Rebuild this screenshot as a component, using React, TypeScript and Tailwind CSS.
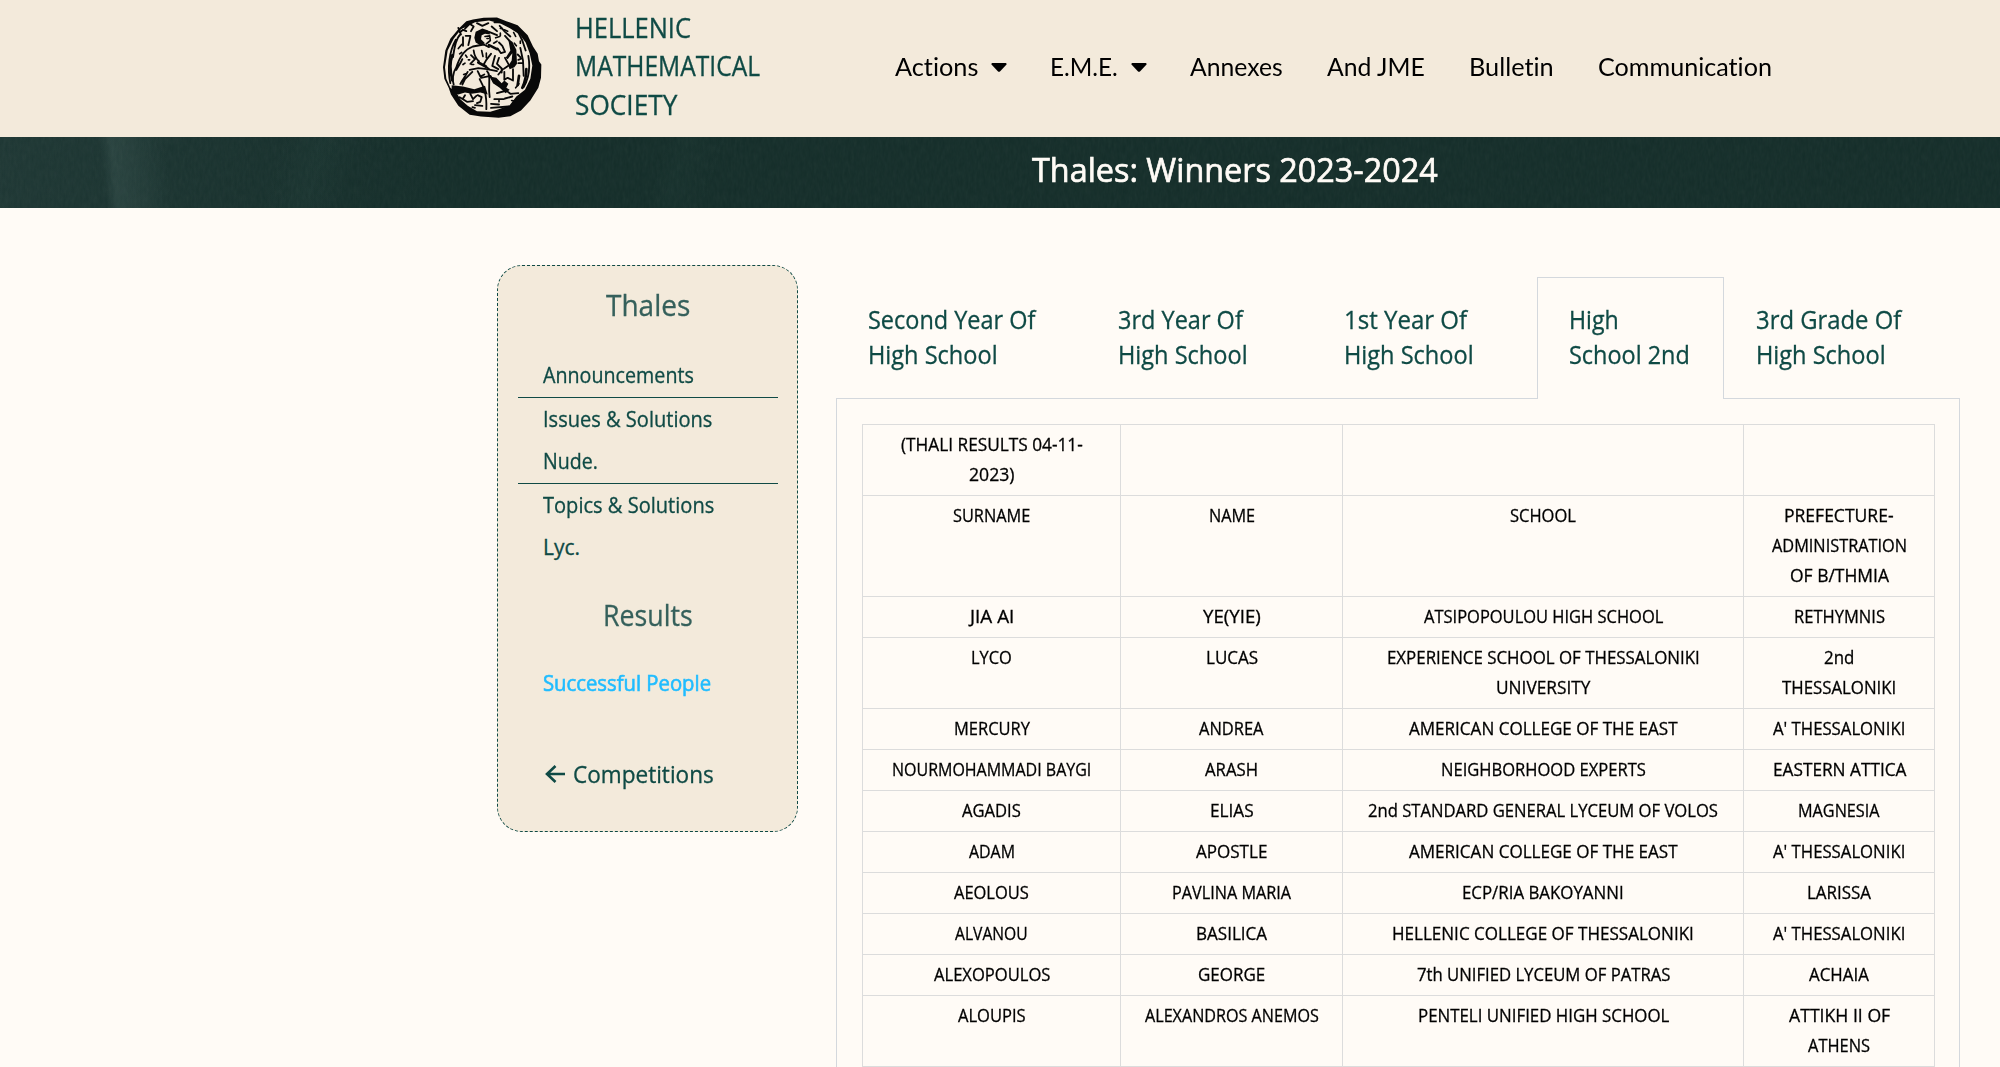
import { useLayoutEffect, useRef, useState } from "react";

/* A single line of text condensed or widened to an exact measure. */
function Line({ w, children }: { w: number; children: string }) {
  const ref = useRef<HTMLSpanElement>(null);
  const [k, setK] = useState(1);
  useLayoutEffect(() => {
    if (ref.current) setK(w / ref.current.offsetWidth);
  }, [w]);
  return (
    <span className="inline-block text-left align-top whitespace-nowrap" style={{ width: w }}>
      <span ref={ref} className="inline-block origin-left align-top" style={{ transform: `scaleX(${k})` }}>
        {children}
      </span>
    </span>
  );
}

type T = [string, number];
const AM: T[] = [["AMERICAN COLLEGE OF THE EAST", 269]];
const TH: T[] = [["A' THESSALONIKI", 132]];
const rows: T[][][] = [
  [[["(THALI RESULTS 04-11-", 182], ["2023)", 45]], [], [], []],
  [[["SURNAME", 77]], [["NAME", 46]], [["SCHOOL", 66]], [["PREFECTURE-", 110], ["ADMINISTRATION", 135], ["OF B/THMIA", 99]]],
  [[["JIA AI", 44]], [["YE(YIE)", 58]], [["ATSIPOPOULOU HIGH SCHOOL", 239]], [["RETHYMNIS", 91]]],
  [[["LYCO", 41]], [["LUCAS", 52]], [["EXPERIENCE SCHOOL OF THESSALONIKI", 313], ["UNIVERSITY", 94]], [["2nd", 30], ["THESSALONIKI", 114]]],
  [[["MERCURY", 76]], [["ANDREA", 65]], AM, TH],
  [[["NOURMOHAMMADI BAYGI", 199]], [["ARASH", 53]], [["NEIGHBORHOOD EXPERTS", 205]], [["EASTERN ATTICA", 133]]],
  [[["AGADIS", 59]], [["ELIAS", 44]], [["2nd STANDARD GENERAL LYCEUM OF VOLOS", 350]], [["MAGNESIA", 82]]],
  [[["ADAM", 46]], [["APOSTLE", 71]], AM, TH],
  [[["AEOLOUS", 75]], [["PAVLINA MARIA", 119]], [["ECP/RIA BAKOYANNI", 162]], [["LARISSA", 64]]],
  [[["ALVANOU", 73]], [["BASILICA", 71]], [["HELLENIC COLLEGE OF THESSALONIKI", 302]], TH],
  [[["ALEXOPOULOS", 116]], [["GEORGE", 67]], [["7th UNIFIED LYCEUM OF PATRAS", 253]], [["ACHAIA", 60]]],
  [[["ALOUPIS", 68]], [["ALEXANDROS ANEMOS", 174]], [["PENTELI UNIFIED HIGH SCHOOL", 251]], [["ATTIKH II OF", 101], ["ATHENS", 62]]],
];

function Coin() {
  return (
    <svg viewBox="38 50 297 302" className="h-[101px] w-[99px] shrink-0" fill="none" stroke="#080808" strokeLinecap="round" strokeLinejoin="round">
      <path fill="#080808" stroke="none" d="M128 57L160 52L200 51L228 62L262 74L292 104L308 138L322 160L326 182L333 192L332 232L324 262L300 300L272 330L240 347L205 352L152 348L118 343L84 316L62 282L55 262L42 235L38 200L45 150L60 115L85 85L108 62Z" />
      <path fill="#f3eadb" stroke="none" d="M134 65L176 60L212 70L240 84L268 102L286 126L298 158L306 195L300 235L284 268L258 288L238 314L205 326L180 334L140 332L112 316L90 296L78 276L60 262L48 235L44 200L52 150L70 115L92 86Z" />
      <g strokeWidth="5.5">
        <path d="M76 118C58 150 50 200 60 248M90 102C78 112 72 140 68 170M84 82L92 102M88 96L98 88L108 92M98 110V136M106 106H120M120 108L114 134M104 84L118 70L130 78L122 92" />
        <path d="M128 138C104 146 88 168 78 200C66 218 66 240 70 252M128 138L160 132L176 140M130 150C132 166 138 176 146 182M122 164L134 176L120 190M96 176C90 190 82 200 78 208" />
        <path d="M118 208L144 203L170 206L200 212M112 214C106 226 98 236 90 250M126 214L104 236L96 252M142 212L150 228L162 222M170 212C184 226 172 248 178 290M148 236C160 258 170 280 168 326M152 232L180 226L192 246L216 258" />
        <path d="M182 160L168 178L160 192L176 206M194 166L186 196L204 206M206 172L200 190L214 204L214 216M224 172L236 194L222 204M204 222L218 206M222 214V238M248 206V238M222 238L232 232L248 240M206 126L216 136L224 154L212 158L202 144" />
        <path d="M262 92L276 120L286 150M270 142L278 180L280 226M294 166C300 200 296 232 280 260M262 162L270 170M264 178L274 174M264 188H276M208 76L224 94L240 108M224 106L244 128M140 68L156 76L174 68M184 78L200 92M176 94L200 104" />
        <path d="M104 284L98 294M120 280L128 296L138 286M142 284L154 290L150 304L140 308M88 290L110 304L128 302M134 314L156 316M182 310L206 312M182 322L234 318M192 296H220M200 278L230 270M218 262L240 280L264 278M224 294L246 288" />
      </g>
      <path fill="#080808" stroke="none" d="M64 254L98 258L132 266L164 256L172 282L150 276L124 280L104 276L84 282L64 276Z" />
      <path fill="#080808" stroke="none" d="M234 118L246 124L258 148L260 190L252 200L238 206L234 196L244 180L246 158L232 176L226 172L240 150Z" />
      <path fill="#080808" stroke="none" d="M178 228L198 232L214 248L222 240L234 250L228 262L238 268L226 278L208 262L188 248Z" />
      <g strokeWidth="8">
        <path d="M66 164C56 190 60 216 66 240M288 206C288 222 284 244 276 262M176 134L200 146M144 186L166 198M266 226L262 254" />
      </g>
      <path fill="#080808" stroke="none" d="M132 112L136 94L156 84L174 90L180 102L164 100L154 104L152 116L164 128L150 134L136 126Z" />
      <path strokeWidth="5" d="M164 108L178 106L180 120L168 130M170 114H174M88 160L94 156M106 164L110 170M98 192L104 188M114 178H118M100 222L106 220M124 192H130M154 150L158 168M168 158V172M196 112L208 108M190 128L200 122M256 262L266 250M270 122V128M244 300L254 302M206 300V304M126 320L134 322M210 84H216M192 66H206M84 144L94 132M210 98V106M222 88L232 92M250 96L256 108M252 128L258 136M110 322L120 330" />
    </svg>
  );
}

const nav: [string, number, string, boolean][] = [
  ["Actions", 83, "w-[155px]", true],
  ["E.M.E.", 68, "w-[140px]", true],
  ["Annexes", 93, "w-[136.5px]", false],
  ["And JME", 98, "w-[142px]", false],
  ["Bulletin", 85, "w-[129px]", false],
  ["Communication", 174, "w-[180px]", false],
];

const streaks =
  "bg-[#142d29] bg-[linear-gradient(84deg,transparent_5.3%,rgba(110,140,135,0.16)_5.9%,rgba(90,120,115,0.1)_7.4%,transparent_8.6%),linear-gradient(100deg,rgba(70,95,95,0.2)_0%,transparent_22%),linear-gradient(108deg,transparent_14%,rgba(60,100,90,0.08)_16%,transparent_18%,transparent_33%,rgba(60,100,90,0.06)_34%,transparent_36%)]";

export default function App() {
  return (
    <div className="h-[1067px] w-[2000px] overflow-hidden bg-[#fffbf6] font-['Open_Sans',sans-serif] text-[#0f4a45] [-webkit-text-stroke:0.3px]">
      <header className="flex h-[137px] bg-[#f3eadb] pl-[443px]">
        <div className="pt-[16.5px]">
          <Coin />
        </div>
        <div className="flex w-[318px] flex-col pt-[8.6px] pl-[33px] text-[27px] leading-[38.6px]">
          <Line w={116}>HELLENIC</Line>
          <Line w={185}>MATHEMATICAL</Line>
          <Line w={102}>SOCIETY</Line>
        </div>
        <nav className="flex pt-[46px] pl-[35px] font-['Lato',sans-serif] text-[25px] leading-10 text-black [font-variant-ligatures:none] [-webkit-text-stroke:0]">
          {nav.map(([t, w, cls, caret]) => (
            <a key={t} className={`flex ${cls}`}>
              <Line w={w}>{t}</Line>
              {caret && (
                <svg viewBox="0 0 16 9" className="mt-[17px] ml-[13px] h-[9px] w-4">
                  <path d="M1.2 0H14.8Q16.2 .6 15.3 1.8L9.2 8.3Q8 9.3 6.8 8.3L.7 1.8Q-.2 .6 1.2 0Z" />
                </svg>
              )}
            </a>
          ))}
        </nav>
      </header>

      <div className={`relative h-[71px] ${streaks}`}>
        <svg className="absolute inset-0 h-full w-full opacity-5">
          <filter id="grain">
            <feTurbulence type="fractalNoise" baseFrequency="0.35 0.12" numOctaves="3" />
            <feColorMatrix type="saturate" values="0.3" />
          </filter>
          <rect width="100%" height="100%" filter="url(#grain)" />
        </svg>
        <h1 className="relative pt-[9px] pl-[1032px] text-[33px] leading-[48px] text-[#fffbf6] [-webkit-text-stroke:0.7px]">
          <Line w={406}>Thales: Winners 2023-2024</Line>
        </h1>
      </div>

      <main className="flex pl-[497px]">
        <aside className="mt-[57px] h-[567px] w-[301px] shrink-0 rounded-[25px] border border-dashed border-[#0f4a45] bg-[#f3eadb] pr-[19px] pl-5 text-[21px] leading-[42px]">
          <h2 className="pt-[18px] text-center text-[30px] text-[#35605b]">
            <Line w={84}>Thales</Line>
          </h2>
          <div className="mt-[28px] h-[44px] border-b border-[#0f4a45] pl-[25px]">
            <Line w={151}>Announcements</Line>
          </div>
          <div className="flex h-[86px] flex-col border-b border-[#0f4a45] pl-[25px]">
            <Line w={169}>Issues & Solutions</Line>
            <Line w={55}>Nude.</Line>
          </div>
          <div className="flex h-[86px] flex-col pl-[25px]">
            <Line w={171}>Topics & Solutions</Line>
            <Line w={37}>Lyc.</Line>
          </div>
          <h2 className="pt-[24px] text-center text-[30px] text-[#35605b]">
            <Line w={90}>Results</Line>
          </h2>
          <div className="mt-[26px] pl-[25px] text-[#20bcff] [-webkit-text-stroke:0.6px]">
            <Line w={168}>Successful People</Line>
          </div>
          <div className="mt-[49px] flex items-start pl-[27px] text-[24px]">
            <svg viewBox="0 0 20 18" className="mt-[12px] mr-2 h-[18px] w-5" fill="none" stroke="currentColor" strokeWidth="2.6">
              <path d="M10.5 1L2 9L10.5 17M2 9H20" />
            </svg>
            <Line w={141}>Competitions</Line>
          </div>
        </aside>

        <section className="ml-[37px] w-[1125px] shrink-0 pt-[69px]">
          <div className="flex h-[121px] text-[25px] leading-[35px]">
            <div className="flex w-[250px] flex-col pt-[25px] pl-[33px]">
              <Line w={167}>Second Year Of</Line>
              <Line w={130}>High School</Line>
            </div>
            <div className="flex w-[227px] flex-col pt-[25px] pl-[33px]">
              <Line w={125}>3rd Year Of</Line>
              <Line w={130}>High School</Line>
            </div>
            <div className="flex w-[225px] flex-col pt-[25px] pl-8">
              <Line w={123}>1st Year Of</Line>
              <Line w={130}>High School</Line>
            </div>
            <div className="relative z-10 flex h-[122px] w-[187px] flex-col border border-b-0 border-[#d4d8dd] bg-[#fffbf6] pt-[24px] pl-[31px]">
              <Line w={50}>High</Line>
              <Line w={121}>School 2nd</Line>
            </div>
            <div className="flex flex-col pt-[25px] pl-8">
              <Line w={145}>3rd Grade Of</Line>
              <Line w={130}>High School</Line>
            </div>
          </div>
          <div className="ml-px border border-[#d4d8dd] px-[25px] pt-[25px] pb-10">
            <table className="w-[1072px] table-fixed border-collapse text-center text-[18px] leading-[30px] text-black">
              <colgroup>
                <col className="w-[258px]" />
                <col className="w-[222px]" />
                <col className="w-[401px]" />
                <col className="w-[191px]" />
              </colgroup>
              <tbody>
                {rows.map((r, i) => (
                  <tr key={i}>
                    {r.map((c, j) => (
                      <td key={j} className="border border-[#dcdcdc] px-0 pt-[4px] pb-[6px] align-top">
                        <div className="flex flex-col items-center">
                          {c.map(([t, w]) => (
                            <Line key={t} w={w}>{t}</Line>
                          ))}
                        </div>
                      </td>
                    ))}
                  </tr>
                ))}
              </tbody>
            </table>
          </div>
        </section>
      </main>
    </div>
  );
}
